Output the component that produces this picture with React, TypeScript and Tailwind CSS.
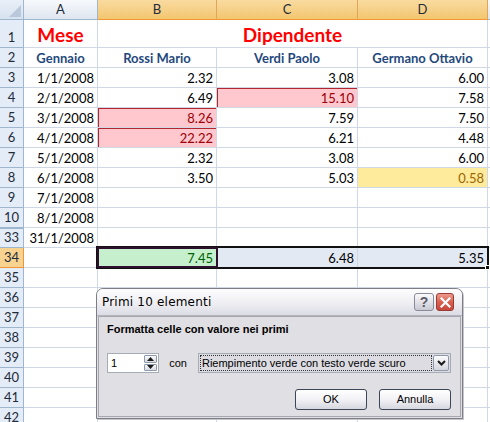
import React from 'react';

type Cell = { t?: string; k?: 'h' | 'n' | 'pink' | 'yellow' | 'green' | 'sel' };
type Row = { n: string; cells: Cell[]; hl?: boolean; topThick?: boolean };

const W = ['w-[74px]', 'w-[119px]', 'w-[141px]', 'w-[130px]'];

const rows: Row[] = [
  { n: '2', cells: [{ t: 'Gennaio', k: 'h' }, { t: 'Rossi Mario', k: 'h' }, { t: 'Verdi Paolo', k: 'h' }, { t: 'Germano Ottavio', k: 'h' }] },
  { n: '3', cells: [{ t: '1/1/2008' }, { t: '2.32' }, { t: '3.08' }, { t: '6.00' }] },
  { n: '4', cells: [{ t: '2/1/2008' }, { t: '6.49' }, { t: '15.10', k: 'pink' }, { t: '7.58' }] },
  { n: '5', cells: [{ t: '3/1/2008' }, { t: '8.26', k: 'pink' }, { t: '7.59' }, { t: '7.50' }] },
  { n: '6', cells: [{ t: '4/1/2008' }, { t: '22.22', k: 'pink' }, { t: '6.21' }, { t: '4.48' }] },
  { n: '7', cells: [{ t: '5/1/2008' }, { t: '2.32' }, { t: '3.08' }, { t: '6.00' }] },
  { n: '8', cells: [{ t: '6/1/2008' }, { t: '3.50' }, { t: '5.03' }, { t: '0.58', k: 'yellow' }] },
  { n: '9', cells: [{ t: '7/1/2008' }, {}, {}, {}] },
  { n: '10', cells: [{ t: '8/1/2008' }, {}, {}, {}] },
  { n: '33', topThick: true, cells: [{ t: '31/1/2008' }, {}, {}, {}] },
  { n: '34', hl: true, cells: [{}, { t: '7.45', k: 'green' }, { t: '6.48', k: 'sel' }, { t: '5.35', k: 'sel' }] },
  ...['35', '36', '37', '38', '39', '40', '41', '42'].map((n) => ({ n, cells: [{}, {}, {}, {}] as Cell[] })),
];

function cellClass(k?: Cell['k']) {
  switch (k) {
    case 'h':
      return 'justify-center font-bold text-[#1f497d]';
    case 'pink':
      return 'justify-end bg-[#ffc7ce] text-[#9c0006] border-[#b3262e] shadow-[inset_1px_1px_0_0_#b3262e]';
    case 'yellow':
      return 'justify-end bg-[#ffeb9c] text-[#9c6500]';
    case 'green':
      return 'justify-end bg-[#c6efce] text-[#006100]';
    case 'sel':
      return 'justify-end bg-[#e3e9f3] text-black';
    default:
      return 'justify-end text-black';
  }
}

function SpinArrow({ up }: { up?: boolean }) {
  return (
    <svg width="7" height="4" viewBox="0 0 7 4">
      {up ? <path d="M0 4 L3.5 0 L7 4 Z" fill="#1a1a1a" /> : <path d="M0 0 L3.5 4 L7 0 Z" fill="#1a1a1a" />}
    </svg>
  );
}

export default function App() {
  return (
    <div className="relative w-[490px] h-[422px] overflow-hidden bg-white" style={{ fontFamily: 'Lato, "Open Sans", sans-serif' }}>
      {/* Column headers */}
      <div className="flex h-[20px]">
        <div className="relative w-[24px] shrink-0 border-r border-b border-[#9eb6ce] bg-gradient-to-b from-[#e9eff7] to-[#d7e2f0]">
          <svg className="absolute right-[2px] bottom-[2px]" width="12" height="12" viewBox="0 0 12 12">
            <path d="M12 0 L12 12 L0 12 Z" fill="#b9c8da" />
          </svg>
        </div>
        <div className={`${W[0]} shrink-0 flex items-center justify-center border-r border-b border-[#9eb6ce] bg-gradient-to-b from-[#f7f9fc] to-[#dfe6f0] text-[13px] text-[#1e2b3a]`}>A</div>
        {['B', 'C', 'D'].map((l, i) => (
          <div key={l} className={`${W[i + 1]} shrink-0 flex items-center justify-center border-r border-b border-r-[#e0a555] border-b-[#f29536] bg-gradient-to-b from-[#f9dba0] to-[#f3c66f] text-[13px] text-[#1e2b3a]`}>{l}</div>
        ))}
        <div className="flex-1 border-b border-[#9eb6ce] bg-gradient-to-b from-[#f7f9fc] to-[#dfe6f0]" />
      </div>

      {/* Row 1 */}
      <div className="flex h-[28px]">
        <div className="w-[24px] shrink-0 flex items-end justify-center pb-[3px] border-r border-b border-[#9eb6ce] bg-[#e4ecf7] text-[13px] leading-none text-[#1e2b3a]">1</div>
        <div className={`${W[0]} shrink-0 flex items-end justify-center border-r border-b border-[#d0d7e5] text-[19px] leading-[24px] font-bold text-[#ff0000]`}>Mese</div>
        <div className="w-[390px] shrink-0 flex items-end justify-center border-r border-b border-[#d0d7e5] text-[19px] leading-[24px] font-bold text-[#ff0000]">Dipendente</div>
        <div className="flex-1 border-b border-[#d0d7e5]" />
      </div>

      {rows.map((r) => (
        <div key={r.n} className="flex h-[20px]">
          <div
            className={`w-[24px] shrink-0 flex items-center justify-center border-r border-b text-[13px] leading-none text-[#1e2b3a] ${
              r.hl ? 'bg-[#f8d28f] border-[#f29536]' : 'bg-[#e4ecf7] border-[#9eb6ce]'
            } ${r.topThick ? 'shadow-[inset_0_1px_0_0_#9eb6ce]' : ''}`}
          >
            {r.n}
          </div>
          {r.cells.map((c, i) => (
            <div
              key={i}
              className={`${W[i]} shrink-0 flex items-end px-[3px] border-r border-b border-[#d0d7e5] text-[13px] leading-[18px] whitespace-nowrap ${cellClass(c.k)}`}
            >
              {c.t}
            </div>
          ))}
          <div className="flex-1 border-b border-[#d0d7e5]" />
        </div>
      ))}

      {/* Selection border B34:D34 */}
      <div className="absolute left-[96px] top-[246px] w-[393px] h-[23px] border-[2px] border-[#111]" />
      <div className="absolute left-[97px] top-[247px] w-[121px] h-[21px] border-[2px] border-[#2e0f2e]" />
      <div className="absolute left-[485px] top-[265px] w-[5px] h-[5px] bg-[#111] border border-white" />

      {/* Dialog */}
      <div
        className="absolute left-[96px] top-[288px] w-[367px] h-[131px] flex flex-col rounded-t-[7px] border border-[#7d7d88] bg-[#e0dfe3] shadow-[1px_1px_0_0_#c6c6cc]"
        style={{ fontFamily: '"Liberation Sans", Arial, sans-serif' }}
      >
        {/* title bar */}
        <div className="h-[27px] shrink-0 flex items-center pl-[5px] pr-[8px] rounded-t-[6px] bg-gradient-to-b from-[#fdfdfe] via-[#f0f0f4] to-[#dcdce5] border-b border-[#b5b5bf]">
          <span className="text-[12px] text-black tracking-[0.2px]" style={{ fontFamily: '"DejaVu Sans", sans-serif' }}>
            Primi 10 elementi
          </span>
          <div className="ml-auto flex gap-[2px]">
            <div className="w-[20px] h-[18px] flex items-center justify-center rounded-[3px] border border-[#8a8a98] bg-gradient-to-b from-[#fbfbfd] to-[#c9c9d3] text-[14px] font-bold text-[#5a5a66] leading-none">
              ?
            </div>
            <div className="w-[18px] h-[18px] flex items-center justify-center rounded-[3px] border border-[#9b3b34] bg-gradient-to-b from-[#eb9a8e] via-[#d9604f] to-[#c8473a]">
              <svg width="11" height="11" viewBox="0 0 11 11">
                <path d="M1.5 1.5 L9.5 9.5 M9.5 1.5 L1.5 9.5" stroke="white" strokeWidth="2.2" strokeLinecap="square" />
              </svg>
            </div>
          </div>
        </div>

        {/* body */}
        <div className="flex-1 mx-[1px] mb-[1px] border border-[#a6a6ae] flex flex-col pt-[5px] pl-[8px] pr-[9px]">
          <div className="text-[11px] font-bold text-black leading-[14px]">Formatta celle con valore nei primi</div>
          <div className="mt-[17px] flex items-center">
            <div className="w-[53px] h-[20px] flex items-stretch border border-[#a5acb5] bg-white">
              <div className="flex-1 flex items-center pl-[3px] text-[11px] text-black">1</div>
              <div className="w-[15px] flex flex-col gap-[1px] p-[1px]">
                <div className="flex-1 flex items-center justify-center rounded-[1px] border border-[#8f9aa8] bg-gradient-to-b from-[#fafafc] to-[#d8dae2]">
                  <SpinArrow up />
                </div>
                <div className="flex-1 flex items-center justify-center rounded-[1px] border border-[#8f9aa8] bg-gradient-to-b from-[#fafafc] to-[#d8dae2]">
                  <SpinArrow />
                </div>
              </div>
            </div>
            <span className="ml-[10px] text-[11px] text-black">con</span>
            <div className="ml-[11px] w-[257px] h-[20px] flex items-stretch border border-[#a5acb5] bg-[#dcdce2] p-[1px]">
              <div className="flex-1 flex items-center border border-dotted border-[#333] pl-[1px] text-[11px] text-black whitespace-nowrap">
                Riempimento verde con testo verde scuro
              </div>
              <div className="w-[16px] ml-[1px] flex items-center justify-center rounded-[2px] border border-[#8f9aa8] bg-gradient-to-b from-[#fbfbfd] to-[#d4d6de]">
                <svg width="9" height="6" viewBox="0 0 9 6">
                  <path d="M1 1 L4.5 4.5 L8 1" stroke="#1a1a1a" strokeWidth="2" fill="none" />
                </svg>
              </div>
            </div>
          </div>
          <div className="mt-[16px] flex justify-end gap-[12px]">
            <div className="w-[72px] h-[21px] flex items-center justify-center rounded-[3px] border border-[#3c4656] bg-gradient-to-b from-[#ffffff] via-[#f2f2f6] to-[#d6d6de] text-[11px] text-black">
              OK
            </div>
            <div className="w-[72px] h-[21px] flex items-center justify-center rounded-[3px] border border-[#3c4656] bg-gradient-to-b from-[#ffffff] via-[#f2f2f6] to-[#d6d6de] text-[11px] text-black">
              Annulla
            </div>
          </div>
        </div>
      </div>
    </div>
  );
}
